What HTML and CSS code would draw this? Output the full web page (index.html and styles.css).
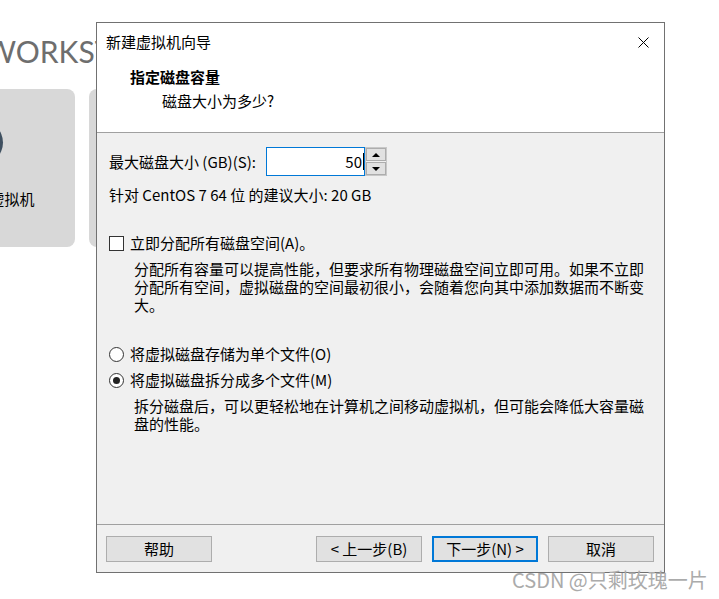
FILE: index.html
```html
<!DOCTYPE html>
<html lang="zh-CN">
<head>
<meta charset="utf-8">
<title>新建虚拟机向导</title>
<link rel="stylesheet" href="styles.css">
</head>
<body>
<div class="app">
  <div class="brand">WORKSTATION PRO</div>
  <div class="cards">
    <div class="card">
      <div class="card-icon"></div>
      <div class="card-label">创建新的虚拟机</div>
    </div>
    <div class="card"></div>
  </div>

  <div class="dialog">
    <div class="titlebar">
      <span class="title">新建虚拟机向导</span>
      <svg class="close" width="11" height="11" viewBox="0 0 11 11">
        <path d="M0.5 0.5 L10.5 10.5 M10.5 0.5 L0.5 10.5" stroke="#000" stroke-width="1" fill="none"/>
      </svg>
    </div>
    <div class="header">
      <div class="h-title">指定磁盘容量</div>
      <div class="h-sub">磁盘大小为多少?</div>
    </div>
    <div class="body">
      <div class="row-size">
        <span class="size-label">最大磁盘大小 (GB)(S):</span>
        <div class="input"><span class="value">50</span><span class="caret"></span></div>
        <div class="spinner">
          <div class="spin-btn"><span class="tri-up"></span></div>
          <div class="spin-btn"><span class="tri-down"></span></div>
        </div>
      </div>
      <div class="hint">针对 CentOS 7 64 位 的建议大小: 20 GB</div>

      <div class="option check-row">
        <span class="checkbox"></span>
        <span>立即分配所有磁盘空间(A)。</span>
      </div>
      <div class="desc desc-1">分配所有容量可以提高性能，但要求所有物理磁盘空间立即可用。如果不立即<br>分配所有空间，虚拟磁盘的空间最初很小，会随着您向其中添加数据而不断变<br>大。</div>

      <div class="option radio-row-1">
        <span class="radio"></span>
        <span>将虚拟磁盘存储为单个文件(O)</span>
      </div>
      <div class="option radio-row-2">
        <span class="radio checked"></span>
        <span>将虚拟磁盘拆分成多个文件(M)</span>
      </div>
      <div class="desc desc-2">拆分磁盘后，可以更轻松地在计算机之间移动虚拟机，但可能会降低大容量磁<br>盘的性能。</div>
    </div>
    <div class="footer">
      <div class="btn help">帮助</div>
      <div class="btn">&lt; 上一步(B)</div>
      <div class="btn default">下一步(N) &gt;</div>
      <div class="btn">取消</div>
    </div>
  </div>

  <div class="watermark">CSDN @只剩玫瑰一片</div>
</div>
</body>
</html>
```
FILE: styles.css
```css
* { box-sizing: border-box; }

body {
  margin: 0;
  width: 719px;
  height: 599px;
  overflow: hidden;
  background: #fff;
  font-family: "Noto Sans CJK SC", "Microsoft YaHei", sans-serif;
  font-size: 15px;
  color: #000;
}

.app {
  position: relative;
  width: 719px;
  height: 599px;
  overflow: hidden;
}

.brand {
  margin: 33px 0 0 -15px;
  font-family: Lato, "Noto Sans", sans-serif;
  font-size: 30px;
  line-height: 36px;
  color: #6e6e6e;
  white-space: nowrap;
}

.cards {
  display: flex;
  gap: 14px;
  margin: 20px 0 0 -105px;
}

.card {
  flex: none;
  width: 180px;
  height: 158px;
  border-radius: 8px;
  background: #d8d8d8;
  display: flex;
  flex-direction: column;
  align-items: center;
}

.card-icon {
  width: 45px;
  height: 45px;
  border-radius: 50%;
  background: #3f5060;
  margin-top: 31px;
  margin-right: 10px;
}

.card-label {
  margin-top: 25px;
  padding-right: 6px;
  line-height: 18px;
  white-space: nowrap;
}

/* dialog window */
.dialog {
  position: absolute;
  left: 96px;
  top: 22px;
  width: 569px;
  height: 551px;
  border: 1px solid #717171;
  background: #f0f0f0;
  display: flex;
  flex-direction: column;
}

.titlebar {
  height: 38px;
  flex: none;
  background: #fff;
  display: flex;
  align-items: center;
  justify-content: space-between;
  padding-left: 9px;
}

.title { line-height: 18px; }

.close {
  margin-right: 15px;
  display: block;
}

.header {
  height: 72px;
  flex: none;
  background: #fff;
  border-bottom: 1px solid #a0a0a0;
  padding-left: 33px;
}

.h-title {
  margin-top: 7px;
  font-weight: bold;
  line-height: 18px;
}

.h-sub {
  margin-top: 6px;
  padding-left: 32px;
  line-height: 18px;
}

.body {
  height: 392px;
  flex: none;
  border-bottom: 1px solid #a0a0a0;
  padding: 14px 0 0 12px;
}

.row-size {
  display: flex;
  align-items: center;
  height: 29px;
}

.size-label {
  width: 157px;
  line-height: 18px;
  white-space: nowrap;
}

.input {
  width: 99px;
  height: 29px;
  border: 1px solid #0078d7;
  background: #fff;
  display: flex;
  align-items: center;
  justify-content: flex-end;
  padding-right: 0;
}

.value { line-height: 18px; }

.caret {
  width: 1px;
  height: 17px;
  background: #000;
  margin-left: 1px;
}

.spinner {
  width: 22px;
  height: 29px;
  border: 1px solid #c8c8c8;
  background: #f0f0f0;
  display: flex;
  flex-direction: column;
  gap: 1px;
}

.spin-btn {
  height: 13px;
  border: 1px solid #adadad;
  background: #e1e1e1;
  display: flex;
  align-items: center;
  justify-content: center;
}

.tri-up {
  width: 0;
  height: 0;
  border-left: 4px solid transparent;
  border-right: 4px solid transparent;
  border-bottom: 4px solid #000;
}

.tri-down {
  width: 0;
  height: 0;
  border-left: 4px solid transparent;
  border-right: 4px solid transparent;
  border-top: 4px solid #000;
}

.hint {
  margin-top: 10px;
  line-height: 18px;
}

.option {
  display: flex;
  align-items: center;
  height: 18px;
  line-height: 18px;
  white-space: nowrap;
}

.check-row { margin-top: 30px; }
.radio-row-1 { margin-top: 31px; }
.radio-row-2 { margin-top: 8px; }

.checkbox {
  width: 15px;
  height: 15px;
  border: 1px solid #333;
  background: #fff;
  margin-right: 6px;
  flex: none;
}

.radio {
  width: 15px;
  height: 15px;
  border: 1px solid #333;
  border-radius: 50%;
  background: #fff;
  margin-right: 6px;
  flex: none;
  display: flex;
  align-items: center;
  justify-content: center;
}

.radio.checked::after {
  content: "";
  width: 7px;
  height: 7px;
  border-radius: 50%;
  background: #222;
}

.desc {
  padding-left: 25px;
  line-height: 18px;
  white-space: nowrap;
}

.desc-1 { margin-top: 8px; }
.desc-2 { margin-top: 8px; }

.footer {
  flex: none;
  height: 47px;
  display: flex;
  gap: 10px;
  padding: 11px 10px 0 9px;
}

.btn {
  width: 106px;
  height: 26px;
  border: 1px solid #adadad;
  background: #e1e1e1;
  display: flex;
  align-items: center;
  justify-content: center;
  line-height: 18px;
  white-space: nowrap;
}

.btn.help { margin-right: auto; }

.btn.default { border: 2px solid #0078d7; }

.watermark {
  position: absolute;
  left: 512px;
  top: 568px;
  font-size: 20px;
  line-height: 24px;
  color: #ababab;
  white-space: nowrap;
}
```
